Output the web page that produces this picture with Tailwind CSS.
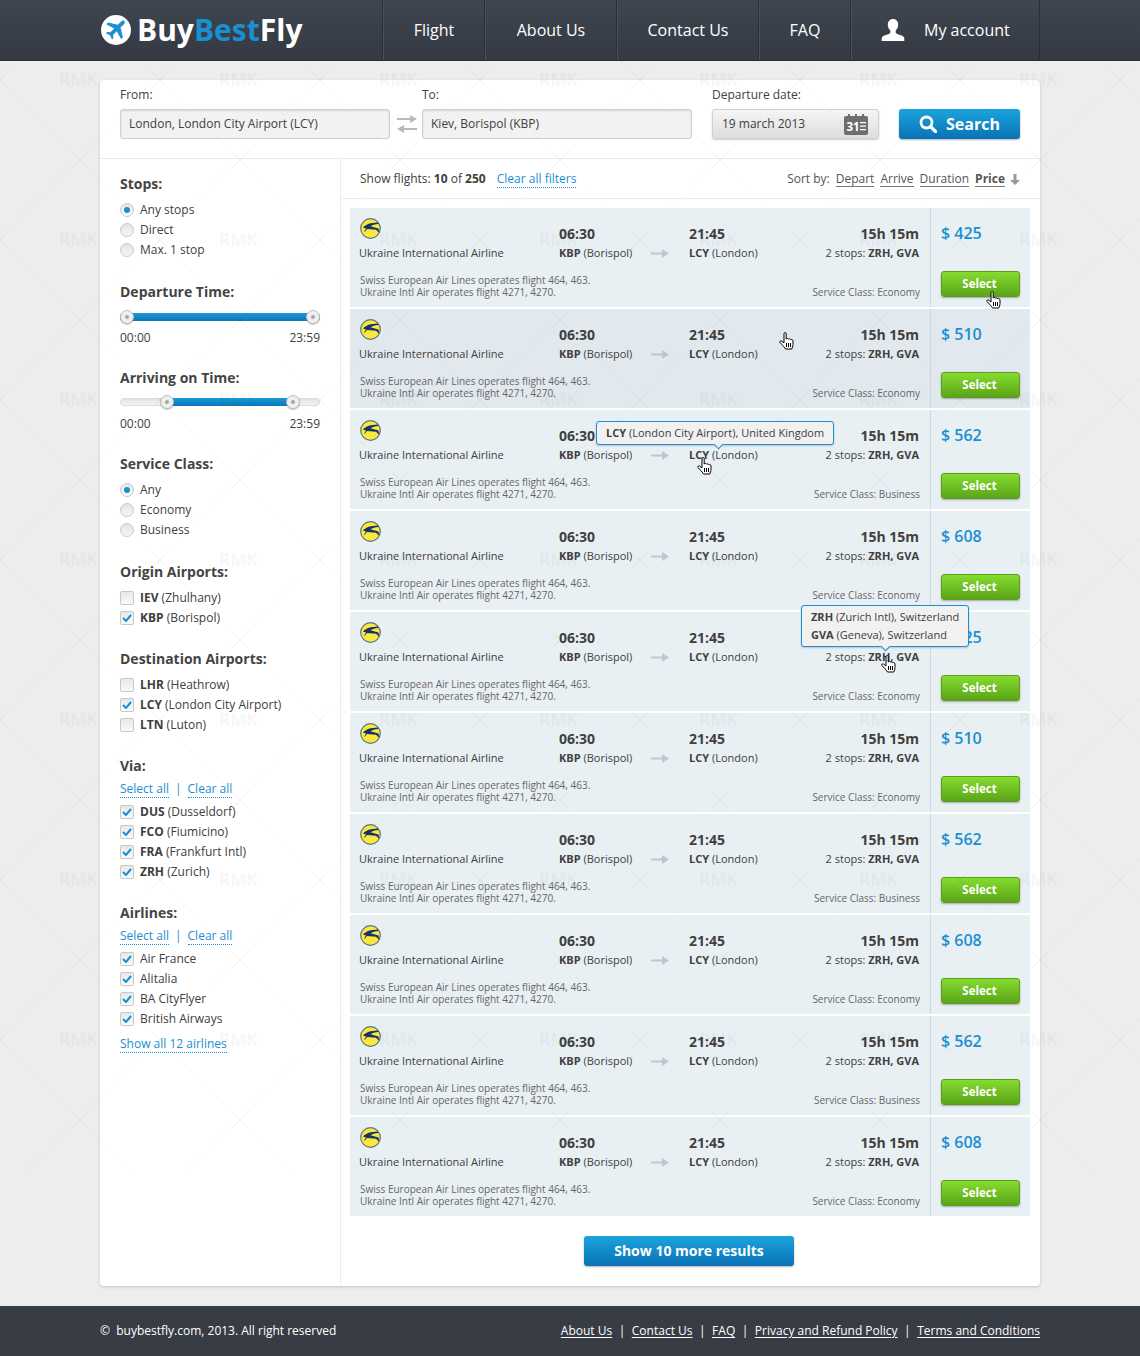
<!DOCTYPE html>
<html lang="en">
<head>
<meta charset="UTF-8">
<title>BuyBestFly - Flights</title>
<script src="https://cdn.jsdelivr.net/npm/@tailwindcss/browser@4"></script>
</head>
<body class="relative bg-[#ededed] text-[#404040] font-['Open_Sans',sans-serif] text-[12px] leading-[20px] antialiased">

<!-- header -->
<header class="h-[61px] bg-gradient-to-b from-[#3f4650] to-[#343942] border-b border-[#2a2e35]">
  <div class="w-[940px] mx-auto flex h-full">
    <a class="flex items-center w-[282px] h-full pl-[1px]">
      <svg width="30" height="30" viewBox="0 0 32 32" class="shrink-0">
        <circle cx="16" cy="16" r="16" fill="#fff"/>
        <path d="M24.6 6.2c1.1 1 1 2.5-.1 3.6l-3.700 3.600 2.600 10.300-2 2-4.600-8.400-4 3.900.5 3.400-1.500 1.500-2.200-4.400-4.400-2.200 1.500-1.500 3.400.5 3.900-4-8.400-4.600 2-2 10.300 2.600 3.600-3.700c1-1.100 2.200-1.400 3.100-.6z" fill="#1a8fd1"/>
      </svg>
      <span class="ml-[6px] text-[30px] font-bold leading-none text-white">Buy<span class="text-[#1a8fd1]">Best</span>Fly</span>
    </a>
    <nav class="flex h-full text-[16px] text-white border-l border-[#2a2e35]">
      <a class="w-[102px] pb-[1px] flex items-center justify-center border-l border-[#4a515b] border-r border-r-[#2a2e35]">Flight</a>
      <a class="w-[132px] pb-[1px] flex items-center justify-center border-l border-[#4a515b] border-r border-r-[#2a2e35]">About Us</a>
      <a class="w-[142px] pb-[1px] flex items-center justify-center border-l border-[#4a515b] border-r border-r-[#2a2e35]">Contact Us</a>
      <a class="w-[92px] pb-[1px] flex items-center justify-center border-l border-[#4a515b] border-r border-r-[#2a2e35]">FAQ</a>
      <a class="w-[189px] pb-[1px] flex items-center pl-[29px] border-l border-[#4a515b] border-r border-r-[#2a2e35]">
        <svg width="24" height="24" viewBox="0 0 24 24" fill="#fff" class="mr-[19px]"><path d="M12 1c3.300 0 5.200 2.500 5.200 5.600 0 2.400-1 4.700-2.500 6v2.200c.6.900 2.400 1.500 4.300 2.200 2.300.8 4.300 1.600 4.300 3.500V23H.7v-2.500c0-1.900 2-2.700 4.300-3.500 1.900-.7 3.700-1.300 4.300-2.200v-2.200c-1.500-1.300-2.500-3.600-2.500-6C6.800 3.500 8.700 1 12 1z"/></svg>
        My account
      </a>
    </nav>
  </div>
</header>

<!-- main card -->
<main class="w-[940px] h-[1206px] mx-auto mt-[19px] bg-white rounded-[4px] shadow-[0_1px_3px_rgba(0,0,0,0.18)]">

  <!-- search bar -->
  <form class="h-[79px] px-[20px] pt-[5px] border-b border-[#ececec] flex items-start">
    <label class="w-[270px] block">
      <span class="block text-[12px] leading-[20px]">From:</span>
      <span class="mt-[4px] h-[30px] flex items-center px-[8px] bg-[#f2f2f2] border border-[#d0d0d0] rounded-[3px] shadow-[inset_0_1px_2px_rgba(0,0,0,0.12)] text-[12px]">London, London City Airport (LCY)</span>
    </label>
    <svg width="20" height="18" viewBox="0 0 20 18" class="ml-[7px] mr-[5px] mt-[30px] shrink-0" fill="#b9b9b9"><path d="M0 3h13V0l7 4-7 4V5H0z"/><path d="M20 13H7v-3l-7 4 7 4v-3h13z"/></svg>
    <label class="w-[270px] block">
      <span class="block text-[12px] leading-[20px]">To:</span>
      <span class="mt-[4px] h-[30px] flex items-center px-[8px] bg-[#f2f2f2] border border-[#d0d0d0] rounded-[3px] shadow-[inset_0_1px_2px_rgba(0,0,0,0.12)] text-[12px]">Kiev, Borispol (KBP)</span>
    </label>
    <label class="w-[167px] ml-[20px] block">
      <span class="block text-[12px] leading-[20px]">Departure date:</span>
      <span class="mt-[4px] h-[30px] flex items-center justify-between pl-[9px] pr-[10px] bg-gradient-to-b from-[#f5f5f5] to-[#dedede] border border-[#cfcfcf] rounded-[3px] shadow-[0_1px_2px_rgba(0,0,0,0.2)] text-[12px]">19 march 2013
        <svg width="24" height="21" viewBox="0 0 24 21"><rect y="2" width="24" height="19" rx="2" fill="#6e6e6e"/><path d="M4 0h2v3H4zM11 0h2v3h-2zM18 0h2v3h-2z" fill="#6e6e6e"/><text x="2.500" y="17" font-size="11.500" font-weight="700" fill="#fff" font-family="Open Sans">31</text><path d="M16 8h6v1.300h-6zM16 11.500h6v1.300h-6zM16 15h6v1.300h-6z" fill="#fff"/></svg>
      </span>
    </label>
    <button type="button" class="ml-[20px] mt-[24px] w-[121px] h-[30px] flex items-center justify-center gap-[9px] pb-[1px] rounded-[3px] bg-gradient-to-b from-[#1ca4dd] to-[#0a72b6] shadow-[0_1px_2px_rgba(0,0,0,0.3)] text-white text-[16px] font-bold">
      <svg width="18" height="18" viewBox="0 0 18 18" fill="none" stroke="#fff"><circle cx="7.500" cy="7.500" r="5.500" stroke-width="2.800"/><path d="M11.500 11.500l5 5" stroke-width="3.200" stroke-linecap="round"/></svg>
      Search
    </button>
  </form>

  <div class="flex h-[1126px]">
    <!-- filters -->
    <aside class="w-[241px] shrink-0 border-r border-[#ececec] pl-[20px] pr-[20px] pt-[15px]">
      <h3 class="text-[14px] font-bold leading-[20px] text-[#444]">Stops:</h3>
      <ul class="mt-[6px]">
        <li class="h-[20px] flex items-center"><i class="w-[14px] h-[14px] rounded-full bg-gradient-to-b from-[#e8e8e8] to-[#fafafa] border border-[#c8c8c8] flex items-center justify-center mr-[6px]"><b class="w-[6px] h-[6px] rounded-full bg-[#1a8fd1]"></b></i>Any stops</li>
        <li class="h-[20px] flex items-center"><i class="w-[14px] h-[14px] rounded-full bg-gradient-to-b from-[#e4e4e4] to-[#f6f6f6] border border-[#c8c8c8] mr-[6px]"></i>Direct</li>
        <li class="h-[20px] flex items-center"><i class="w-[14px] h-[14px] rounded-full bg-gradient-to-b from-[#e4e4e4] to-[#f6f6f6] border border-[#c8c8c8] mr-[6px]"></i>Max. 1 stop</li>
      </ul>

      <h3 class="mt-[22px] text-[14px] font-bold leading-[20px] text-[#444]">Departure Time:</h3>
      <div class="relative mt-[11px] h-[8px] rounded-full bg-gradient-to-b from-[#1a9ad8] to-[#0b76b8]">
        <i class="absolute left-0 top-[-3px] w-[14px] h-[14px] rounded-full bg-[#efefef] border border-[#bdbdbd] shadow-[0_1px_1px_rgba(0,0,0,0.2)] flex items-center justify-center"><b class="w-[4px] h-[4px] rounded-full bg-[#a5a5a5]"></b></i>
        <i class="absolute right-0 top-[-3px] w-[14px] h-[14px] rounded-full bg-[#efefef] border border-[#bdbdbd] shadow-[0_1px_1px_rgba(0,0,0,0.2)] flex items-center justify-center"><b class="w-[4px] h-[4px] rounded-full bg-[#a5a5a5]"></b></i>
      </div>
      <div class="mt-[7px] flex justify-between"><span>00:00</span><span>23:59</span></div>

      <h3 class="mt-[20px] text-[14px] font-bold leading-[20px] text-[#444]">Arriving on Time:</h3>
      <div class="relative mt-[10px] h-[8px] rounded-full bg-gradient-to-b from-[#e2e2e2] to-[#f4f4f4] border border-[#dcdcdc]">
        <b class="absolute left-[46px] right-[26px] top-[-1px] h-[8px] bg-gradient-to-b from-[#1a9ad8] to-[#0b76b8]"></b>
        <i class="absolute left-[39px] top-[-4px] w-[14px] h-[14px] rounded-full bg-[#efefef] border border-[#bdbdbd] shadow-[0_1px_1px_rgba(0,0,0,0.2)] flex items-center justify-center"><b class="w-[4px] h-[4px] rounded-full bg-[#a5a5a5]"></b></i>
        <i class="absolute right-[19px] top-[-4px] w-[14px] h-[14px] rounded-full bg-[#efefef] border border-[#bdbdbd] shadow-[0_1px_1px_rgba(0,0,0,0.2)] flex items-center justify-center"><b class="w-[4px] h-[4px] rounded-full bg-[#a5a5a5]"></b></i>
      </div>
      <div class="mt-[8px] flex justify-between"><span>00:00</span><span>23:59</span></div>

      <h3 class="mt-[20px] text-[14px] font-bold leading-[20px] text-[#444]">Service Class:</h3>
      <ul class="mt-[6px]">
        <li class="h-[20px] flex items-center"><i class="w-[14px] h-[14px] rounded-full bg-gradient-to-b from-[#e8e8e8] to-[#fafafa] border border-[#c8c8c8] flex items-center justify-center mr-[6px]"><b class="w-[6px] h-[6px] rounded-full bg-[#1a8fd1]"></b></i>Any</li>
        <li class="h-[20px] flex items-center"><i class="w-[14px] h-[14px] rounded-full bg-gradient-to-b from-[#e4e4e4] to-[#f6f6f6] border border-[#c8c8c8] mr-[6px]"></i>Economy</li>
        <li class="h-[20px] flex items-center"><i class="w-[14px] h-[14px] rounded-full bg-gradient-to-b from-[#e4e4e4] to-[#f6f6f6] border border-[#c8c8c8] mr-[6px]"></i>Business</li>
      </ul>

      <h3 class="mt-[22px] text-[14px] font-bold leading-[20px] text-[#444]">Origin Airports:</h3>
      <ul class="mt-[6px]" data-checks="0,1">
        <li class="h-[20px] flex items-center"><b>IEV</b>&nbsp;(Zhulhany)</li>
        <li class="h-[20px] flex items-center"><b>KBP</b>&nbsp;(Borispol)</li>
      </ul>

      <h3 class="mt-[21px] text-[14px] font-bold leading-[20px] text-[#444]">Destination Airports:</h3>
      <ul class="mt-[6px]" data-checks="0,1,0">
        <li class="h-[20px] flex items-center"><b>LHR</b>&nbsp;(Heathrow)</li>
        <li class="h-[20px] flex items-center"><b>LCY</b>&nbsp;(London City Airport)</li>
        <li class="h-[20px] flex items-center"><b>LTN</b>&nbsp;(Luton)</li>
      </ul>

      <h3 class="mt-[21px] text-[14px] font-bold leading-[20px] text-[#444]">Via:</h3>
      <p class="mt-[3px] h-[20px] text-[#1a8fd1]"><a class="border-b border-dotted border-[#1a8fd1]">Select all</a><span class="mx-[6px]">|</span><a class="border-b border-dotted border-[#1a8fd1]">Clear all</a></p>
      <ul class="mt-[3px]" data-checks="1,1,1,1">
        <li class="h-[20px] flex items-center"><b>DUS</b>&nbsp;(Dusseldorf)</li>
        <li class="h-[20px] flex items-center"><b>FCO</b>&nbsp;(Fiumicino)</li>
        <li class="h-[20px] flex items-center"><b>FRA</b>&nbsp;(Frankfurt Intl)</li>
        <li class="h-[20px] flex items-center"><b>ZRH</b>&nbsp;(Zurich)</li>
      </ul>

      <h3 class="mt-[21px] text-[14px] font-bold leading-[20px] text-[#444]">Airlines:</h3>
      <p class="mt-[3px] h-[20px] text-[#1a8fd1]"><a class="border-b border-dotted border-[#1a8fd1]">Select all</a><span class="mx-[6px]">|</span><a class="border-b border-dotted border-[#1a8fd1]">Clear all</a></p>
      <ul class="mt-[3px]" data-checks="1,1,1,1">
        <li class="h-[20px] flex items-center">Air France</li>
        <li class="h-[20px] flex items-center">Alitalia</li>
        <li class="h-[20px] flex items-center">BA CityFlyer</li>
        <li class="h-[20px] flex items-center">British Airways</li>
      </ul>
      <p class="mt-[5px] text-[#1a8fd1]"><a class="border-b border-dotted border-[#1a8fd1]">Show all 12 airlines</a></p>
    </aside>

    <!-- results -->
    <section class="flex-1 min-w-0">
      <div class="h-[40px] px-[19px] pt-[1px] flex items-center justify-between border-b border-[#ececec]">
        <p>Show flights: <b>10</b> of <b>250</b> <a class="ml-[8px] text-[#1a8fd1] border-b border-dotted border-[#1a8fd1]">Clear all filters</a></p>
        <p class="flex items-center text-[#555]">Sort by:
          <a class="ml-[6px] border-b border-[#777] leading-[14px]">Depart</a>
          <a class="ml-[6px] border-b border-[#777] leading-[14px]">Arrive</a>
          <a class="ml-[6px] border-b border-[#777] leading-[14px]">Duration</a>
          <a class="ml-[6px] border-b border-[#777] leading-[14px] font-bold">Price</a>
          <svg width="10" height="11" viewBox="0 0 10 11" fill="#999" class="ml-[5px] mr-[1px]"><path d="M3.500 0h3v6H10l-5 5-5-5h3.500z"/></svg>
        </p>
      </div>

      <div id="rows" class="ml-[9px] mr-[10px] mt-[9px] flex flex-col gap-[2px]"></div>

      <div class="mt-[20px] pr-[3px] flex justify-center">
        <button type="button" class="w-[210px] h-[30px] rounded-[3px] bg-gradient-to-b from-[#1ca4dd] to-[#0a72b6] shadow-[0_1px_2px_rgba(0,0,0,0.3)] text-white text-[14px] font-bold">Show 10 more results</button>
      </div>
    </section>
  </div>
</main>

<!-- footer -->
<footer class="mt-[20px] h-[50px] bg-[#383c45] text-white text-[12px]">
  <div class="w-[940px] h-full mx-auto flex items-center justify-between">
    <p>©&nbsp; buybestfly.com, 2013. All right reserved</p>
    <p><a class="underline underline-offset-2">About Us</a><span class="mx-[6.5px]">|</span><a class="underline underline-offset-2">Contact Us</a><span class="mx-[6.5px]">|</span><a class="underline underline-offset-2">FAQ</a><span class="mx-[6.5px]">|</span><a class="underline underline-offset-2">Privacy and Refund Policy</a><span class="mx-[6.5px]">|</span><a class="underline underline-offset-2">Terms and Conditions</a></p>
  </div>
</footer>

<!-- faint watermark tiled over the page, stops before the bottom of the card -->
<svg class="absolute left-0 top-[61px] z-10 pointer-events-none" width="1140" height="1109" aria-hidden="true">
  <defs>
    <pattern id="mark" width="160" height="160" patternUnits="userSpaceOnUse" y="-61">
      <g fill="none" stroke="#000" stroke-opacity="0.035" stroke-width="1">
        <path d="M0 80L80 0L160 80L80 160z" stroke-dasharray="8 7" stroke-dashoffset="-12"/>
        <path d="M-7 73L7 87M-7 87L7 73M153 73L167 87M153 87L167 73M73 -7L87 7M87 -7L73 7M73 153L87 167M87 153L73 167"/>
      </g>
      <text x="59" y="86" font-family="Open Sans" font-size="17" font-weight="700" fill="#000" fill-opacity="0.03">RMK</text>
    </pattern>
  </defs>
  <rect width="1140" height="1109" fill="url(#mark)"/>
</svg>

<!-- tooltips over the rows -->
<div class="absolute left-[596px] top-[421px] z-20 w-[238px] h-[24px] pl-[9px] flex items-center bg-[#f1f1f1] border border-[#1a8fd1] rounded-[3px] text-[11px] whitespace-nowrap shadow-[0_1px_2px_rgba(0,0,0,0.2)]">
  <span><b>LCY</b> (London City Airport), United Kingdom</span>
  <i class="absolute left-1/2 bottom-[-4px] w-[7px] h-[7px] rotate-45 bg-[#f1f1f1] border-r border-b border-[#1a8fd1]"></i>
</div>
<div class="absolute left-[801px] top-[605px] z-20 w-[168px] h-[42px] pl-[9px] pt-[2px] bg-[#f1f1f1] border border-[#1a8fd1] rounded-[3px] text-[11px] leading-[18px] whitespace-nowrap shadow-[0_1px_2px_rgba(0,0,0,0.2)]">
  <p><b>ZRH</b> (Zurich Intl), Switzerland</p>
  <p><b>GVA</b> (Geneva), Switzerland</p>
  <i class="absolute left-[80px] bottom-[-4px] w-[7px] h-[7px] rotate-45 bg-[#f1f1f1] border-r border-b border-[#1a8fd1]"></i>
</div>

<div id="cursors"></div>

<script>
// flight rows
var flights = [
  [425, 'Economy'], [510, 'Economy'], [562, 'Business'], [608, 'Economy'], [425, 'Economy'],
  [510, 'Economy'], [562, 'Business'], [608, 'Economy'], [562, 'Business'], [608, 'Economy']
];
var logo = '<svg width="21" height="21" viewBox="0 0 21 21" class="ml-[1px]"><circle cx="10.500" cy="10.500" r="9.800" fill="#fbe83f" stroke="#5d7380" stroke-width="1.200"/><path d="M3 9.500c3-3.200 7.500-4.800 15-5l.5 1.500c-3.500.2-6.200 1-8 2.200l8 2.200.8 4.600-3.300-3.300-9-.7L5 13.500l-1 .2 2-3.200z" fill="#14336b"/></svg>';
var hand = '<svg width="16" height="19" viewBox="0 0 16 19"><path d="M5 1.500c0-1.300 2.200-1.300 2.200 0V7l.3-.2c.6-.6 1.800-.5 2.100.4.600-.6 1.900-.4 2.200.5.700-.4 2.200 0 2.200 1.300v3.500c0 2-.8 3-1.200 4.500H6.500c-.5-1.300-2-2.500-3-3.800L1 10.500c-.7-1.100.7-2.200 1.800-1.300L5 11z" fill="#fff" stroke="#000" stroke-width="1"/><path d="M7.500 11v4M9.500 11v4M11.500 11v4" stroke="#000"/></svg>';

document.getElementById('rows').innerHTML = flights.map(function (f, i) {
  return '<article class="h-[99px] flex ' + (i == 1 ? 'bg-[#e2e9ee]' : 'bg-[#e9f0f4]') + '">' +
    '<div class="w-[581px] pl-[9px] pr-[10px] pt-[10px] border-r border-[#c9d8e1]">' +
      '<div class="flex">' +
        '<div class="w-[200px]"><div class="h-[21px]">' + logo + '</div><p class="mt-[4px] text-[11px] leading-[20px]">Ukraine International Airline</p></div>' +
        '<div class="w-[130px] pt-[6px]"><p class="text-[14px] font-bold leading-[20px]">06:30</p><p class="text-[11px] leading-[18px]"><b>KBP</b> (Borispol)</p></div>' +
        '<div class="w-[130px] pt-[6px] relative"><svg class="absolute left-[-38px] top-[31px]" width="18" height="9" viewBox="0 0 18 9" fill="#b9c9d2"><path d="M0 3.500h11V0l7 4.500L11 9V5.500H0z"/></svg><p class="text-[14px] font-bold leading-[20px]">21:45</p><p class="text-[11px] leading-[18px]"><b>LCY</b> (London)</p></div>' +
        '<div class="flex-1 pt-[6px] pr-[1px] text-right"><p class="text-[14px] font-bold leading-[20px]">15h 15m</p><p class="text-[11px] leading-[18px]">2 stops: <b>ZRH, GVA</b></p></div>' +
      '</div>' +
      '<div class="mt-[11px] pl-[1px] flex justify-between items-end text-[10px] leading-[12px] text-[#666]"><p>Swiss European Air Lines operates flight 464, 463.<br>Ukraine Intl Air operates flight 4271, 4270.</p><p>Service Class: ' + f[1] + '</p></div>' +
    '</div>' +
    '<div class="flex-1 pl-[10px] pr-[10px] pt-[13px]">' +
      '<p class="text-[16px] font-semibold leading-[24px] text-[#1a8fd1]">$ ' + f[0] + '</p>' +
      '<button type="button" class="mt-[26px] w-[79px] h-[26px] pr-[2px] rounded-[3px] border border-[#5c9e1c] bg-gradient-to-b from-[#86dc2f] to-[#5ba518] shadow-[0_1px_2px_rgba(0,0,0,0.3)] text-white text-[11.500px] font-bold">Select</button>' +
    '</div>' +
  '</article>';
}).join('');

// hand cursors sit on top of the page
document.getElementById('cursors').innerHTML = [[986, 291], [779, 332], [697, 457], [881, 655]].map(function (p) {
  return '<div class="absolute z-30" style="left:' + p[0] + 'px;top:' + p[1] + 'px">' + hand + '</div>';
}).join('');

// checkboxes in the filter lists
document.querySelectorAll('ul[data-checks]').forEach(function (ul) {
  var on = ul.dataset.checks.split(',');
  Array.prototype.forEach.call(ul.children, function (li, i) {
    var tick = on[i] == '1' ? '<svg width="10" height="8" viewBox="0 0 10 8"><path d="M1 4l3 3 5-6" fill="none" stroke="#1a8fd1" stroke-width="2"/></svg>' : '';
    li.insertAdjacentHTML('afterbegin', '<i class="w-[14px] h-[14px] rounded-[2px] bg-gradient-to-b from-[#e8e8e8] to-[#fafafa] border border-[#c8c8c8] flex items-center justify-center mr-[6px]">' + tick + '</i>');
  });
});
</script>
</body>
</html>
